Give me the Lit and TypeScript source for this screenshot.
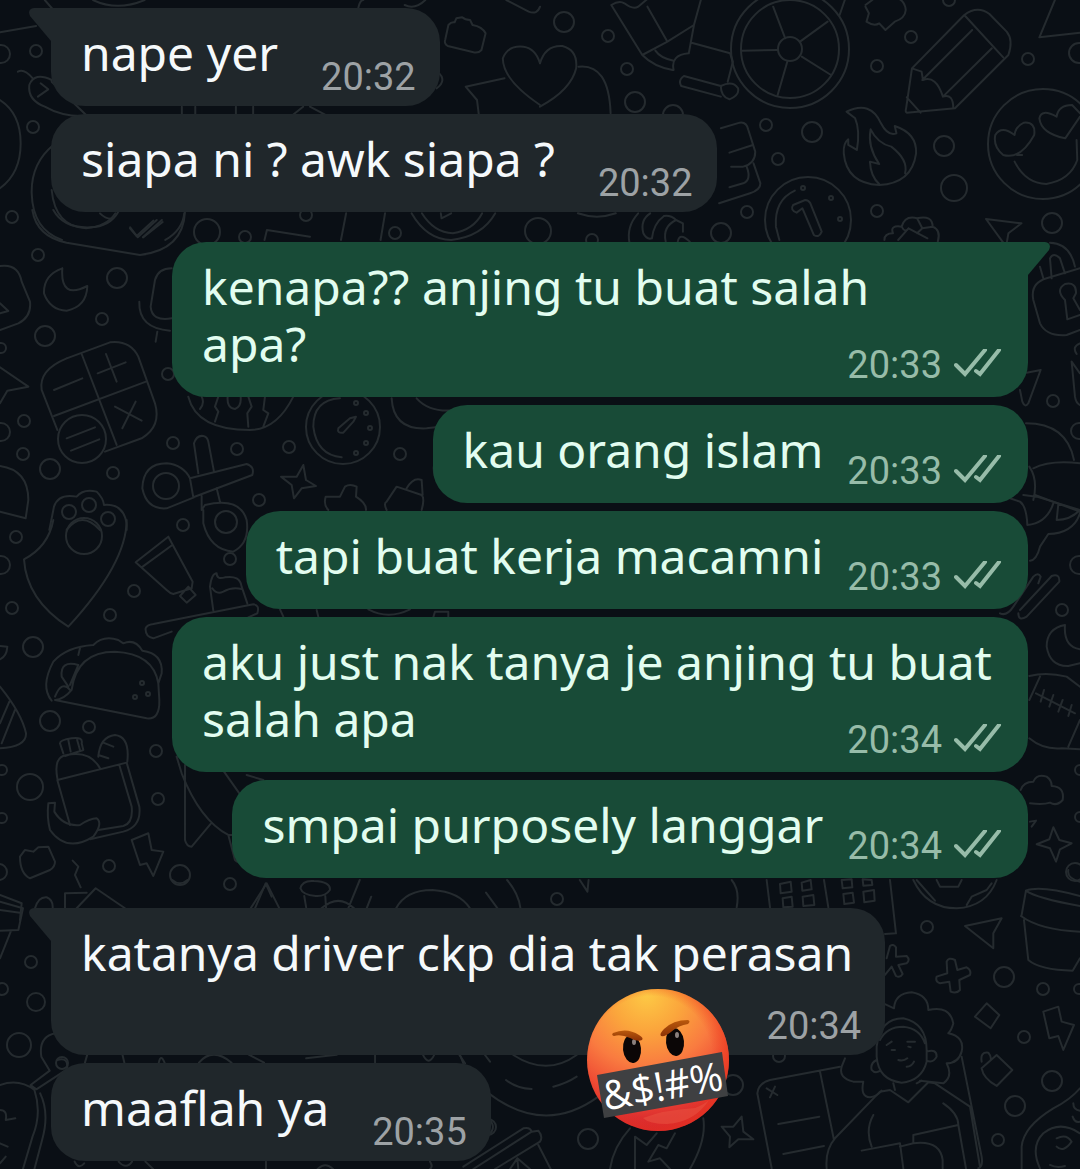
import { LitElement, html, css, svg, nothing } from 'lit';
import { customElement, property } from 'lit/decorators.js';
import { classMap } from 'lit/directives/class-map.js';

type Layout = 'inline' | 'over' | 'below';

interface Message {
  text: string;
  time: string;
  layout?: Layout;
  reaction?: boolean;
}

interface Group {
  mine: boolean;
  messages: Message[];
}

const GROUPS: Group[] = [
  {
    mine: false,
    messages: [
      { text: 'nape yer', time: '20:32' },
      { text: 'siapa ni ? awk siapa ?', time: '20:32' },
    ],
  },
  {
    mine: true,
    messages: [
      { text: 'kenapa?? anjing tu buat salah\napa?', time: '20:33', layout: 'over' },
      { text: 'kau orang islam', time: '20:33' },
      { text: 'tapi buat kerja macamni', time: '20:33' },
      { text: 'aku just nak tanya je anjing tu buat\nsalah apa', time: '20:34', layout: 'over' },
      { text: 'smpai purposely langgar', time: '20:34' },
    ],
  },
  {
    mine: false,
    messages: [
      { text: 'katanya driver ckp dia tak perasan', time: '20:34', layout: 'below', reaction: true },
      { text: 'maaflah ya', time: '20:35' },
    ],
  },
];

/* Wallpaper rings: centre x, centre y, radius. */
const RINGS: number[][] = [
  [1, 54, 9], [36, 51, 6], [33, 127, 6], [12, 217, 6], [207, 232, 13], [245, 237, 6], [306, 215, 6],
  [395, 233, 6], [538, 231, 13], [564, 22, 10], [608, 36, 6], [627, 69, 6], [635, 102, 10], [673, 115, 10],
  [766, 125, 6], [812, 132, 10], [778, 159, 6], [747, 212, 6], [721, 233, 10], [877, 211, 6], [877, 66, 6],
  [911, 37, 6], [949, 0, 6], [1028, 59, 6], [1079, 53, 10], [944, 146, 10], [954, 188, 13], [1052, 223, 10],
  [592, 240, 6], [790, 49, 59], [790, 49, 49], [790, 49, 12], [808, 220, 43], [1043, 144, 55],
  [38, 255, 6], [117, 278, 10], [102, 319, 6], [45, 336, 10], [1, 348, 5], [168, 374, 6], [24, 421, 6],
  [1, 432, 9], [23, 454, 6], [50, 469, 10], [113, 473, 6], [173, 443, 6], [237, 449, 6], [259, 500, 6],
  [183, 525, 6], [166, 486, 13], [226, 522, 11], [69, 512, 7], [89, 505, 7], [108, 519, 7], [82, 439, 24],
  [16, 537, 6], [1, 565, 9], [12, 608, 6], [33, 647, 10], [134, 591, 6], [110, 615, 6], [230, 559, 6],
  [84, 536, 18], [50, 721, 10], [89, 727, 6], [156, 751, 6], [30, 787, 13], [2, 770, 5], [2, 818, 5],
  [158, 799, 6], [-1, 872, 8], [109, 866, 6], [180, 875, 10], [230, 884, 6], [142, 683, 2], [135, 697, 2],
  [148, 694, 2], [289, 447, 6], [400, 454, 6], [343, 427, 37], [356, 403, 2], [366, 413, 2], [370, 428, 2],
  [366, 443, 2], [356, 453, 2], [927, 927, 6], [1004, 977, 10], [1043, 989, 6], [1079, 989, 5],
  [1024, 1037, 6], [1052, 1081, 10], [1015, 1106, 10], [998, 1140, 6], [779, 1056, 6], [733, 1085, 10],
  [31, 962, 6], [2, 989, 6], [36, 1002, 9], [19, 1045, 12], [557, 899, 6], [588, 1139, 10], [488, 1127, 8],
  [62, 1063, 6], [1053, 401, 6], [1079, 431, 8], [1079, 565, 9], [1062, 610, 6], [1080, 770, 5],
  [1080, 817, 5], [1075, 872, 9], [803, 188, 2], [831, 198, 2], [840, 219, 2],
];

/* Wallpaper line art, one entry for each drawing area: transform, paths. */
const SKETCHES: [string, string[]][] = [
  ['scale(.3444 .3333)', [
    'M0 97L105 78M130 0L155 30M270 0Q340 35 420 0M1040 25Q1045 0 1055 0M1175 15Q1205 30 1235 0',
    'M1325 55L1342 52Q1350 60 1365 60L1372 75Q1400 80 1410 100L1398 150Q1390 160 1375 157L1300 138Q1288 130 1293 118L1302 75Q1310 65 1320 67Z',
    'M1470 0L1535 35Q1560 45 1568 20',
    'M1568 315Q1460 240 1460 175Q1475 135 1520 140Q1555 145 1568 190',
    'M1390 342L1385 300L1352 260L1465 235M1270 215Q1300 240 1268 265',
    'M52 215Q70 205 95 235M150 240Q100 215 85 255Q80 300 130 320Q180 350 245 348M150 245L250 345M118 250L140 268L110 290',
    'M0 300Q60 340 60 430Q60 520 0 565M155 435Q90 490 92 580Q95 690 180 720M150 570Q160 680 250 685Q310 680 335 640',
    'M528 320V345M567 320V345M685 320V345M735 320V345M850 345L880 320M900 320L945 345',
    'M378 682L400 712L455 660M415 712L470 660M535 640Q530 690 480 720M768 720L775 690L900 710M1005 640L990 720M1118 640L1105 720',
    'M1195 640Q1240 720 1310 720Q1400 710 1438 640M1225 640Q1260 698 1315 700Q1375 690 1400 640M1280 640L1282 655L1310 640',
  ]],
  ['translate(540 0) scale(.3444 .3333)', [
    'M207 15L297 165L370 125L312 20M207 15Q230 0 245 10Q270 30 285 20L320 -10M297 165Q330 200 385 210M335 152Q350 175 388 182M370 125L447 75L467 0M447 75L432 160M388 210Q378 165 432 160M440 128L552 160L560 185L545 245M418 228L525 258M418 228Q400 240 410 258L525 290M525 258Q525 290 550 298Q580 285 575 265Q560 240 525 258',
    'M0 190Q15 135 65 138Q110 150 105 205Q90 270 0 320M112 200Q200 190 205 340M870 45L885 0',
    'M677 20L712 115M755 125L835 65M760 170L845 225M718 185L690 285M585 152L690 150',
    'M945 15L965 0M945 20L955 40L948 65Q970 80 985 70L1003 90L1030 65Q1060 55 1062 30Q1060 5 1040 -5',
    'M1080 205L1232 45Q1270 15 1305 42L1355 95Q1375 120 1360 165L1205 325L1065 338Q1060 335 1063 325ZM1232 45L1345 172M1255 90L1110 240M1312 145L1170 290M1080 205L1108 215L1112 240Q1150 225 1170 290Q1200 280 1200 325M1065 292L1105 338',
    'M1495 0L1450 112L1568 98',
    'M890 335Q960 300 990 370Q1010 410 1035 400L1030 378Q1095 400 1092 460Q1080 550 985 555Q890 550 882 460Q880 430 895 418L895 435L920 450Q930 390 915 355ZM960 388Q980 430 1020 440Q1070 480 1060 520M960 388Q950 440 985 492L958 485Q960 530 985 552',
    'M1345 465Q1395 480 1435 405Q1440 365 1405 368Q1380 380 1378 405Q1340 375 1322 405Q1315 440 1345 465M1385 465L1400 465M1525 415Q1455 400 1450 355Q1455 325 1500 350Q1505 315 1545 315L1568 340M1525 415L1568 350M1378 485Q1410 550 1470 552Q1540 540 1560 480L1558 420',
    'M525 385L580 368Q600 365 605 390L625 455Q625 490 590 500L555 500M550 458L618 435M620 490L640 550Q640 570 610 580L520 610M600 500Q615 540 590 550L550 562',
    'M740 572Q680 600 685 680L695 720M735 615L770 600Q780 600 785 610L818 695Q810 715 795 705L762 625L745 638Q725 630 735 615',
    'M1000 720Q1000 700 1025 700Q1015 675 1050 680Q1060 645 1095 655Q1140 645 1140 680Q1165 690 1155 725M1050 680Q1060 700 1070 685L1125 715M1070 685L1040 720M1095 655L1110 685L1140 680M1110 685L1095 700',
    'M1295 657L1398 670L1360 700L1355 730M1295 657L1345 728M110 640Q165 660 220 640',
    'M260 730Q250 680 285 640M300 700Q290 660 320 640M325 715Q330 670 360 648M300 700Q310 720 325 715M365 725Q355 680 395 660M395 660L415 670V695M400 725Q405 695 435 725M360 648Q380 645 395 660',
  ]],
  ['translate(0 210) scale(.3333)', [
    'M555 5Q550 120 420 135L200 98Q110 80 97 0M160 0Q190 55 270 52Q330 50 355 5M300 10Q320 30 340 25M390 55L410 78L460 32M430 82L488 36',
    'M0 168Q55 160 65 215L90 275Q95 320 55 340L0 360M0 310L25 303L0 280M187 175Q130 195 132 250Q150 300 200 302Q260 290 262 228Q180 270 187 175',
    'M515 175Q475 175 465 210L452 290Q455 335 515 325M418 275Q415 355 510 362M472 365L467 395',
    'M200 445L330 397Q390 390 415 440L465 580Q485 650 425 685L315 725M172 660L125 540Q115 480 200 445M245 432L350 705M162 618L438 515M162 540L247 505M318 432L350 515M293 490L377 457M345 590L425 632M407 575L367 655M200 685L285 652M213 722L298 688',
    'M0 472L85 530L22 542L0 580M0 768Q85 780 85 870L77 925L0 905',
    'M565 560Q590 660 750 660Q830 660 880 560M605 560Q615 580 600 597M655 560L645 590L655 605L645 635M683 560Q680 595 705 597Q725 590 722 560M745 560L755 590L742 610L745 650M795 560L790 600L805 610L790 650',
    'M595 790L582 700Q590 675 610 678Q622 680 625 695L642 785M570 805L740 762Q765 770 757 795L580 862ZM582 862L500 895Q440 900 427 835Q430 760 500 760Q550 765 570 805M605 858V900L615 885Q720 860 740 930Q750 1000 700 1025Q630 1020 610 940V900M650 835L660 875',
    'M148 960L162 890Q175 850 230 860Q250 835 290 845Q310 865 312 885Q370 880 380 940V960M200 960Q245 900 300 960',
  ]],
  ['translate(0 520) scale(.3333)', [
    'M160 0Q145 80 72 118Q80 240 205 320Q380 130 380 0',
    'M505 50L578 185L575 205L520 222Q510 220 500 210L407 127ZM517 75L425 142M540 228L565 200L587 225L560 248Z',
    'M640 272L630 200Q635 160 650 160Q650 180 675 172Q720 165 725 200L742 250M637 205Q650 225 670 215Q695 200 725 207M515 335L460 355Q435 350 437 325Q440 315 460 312L760 253Q780 255 772 280L745 292',
    'M155 542Q120 500 160 425Q200 380 280 375Q310 345 355 360L370 370Q405 355 427 392Q490 400 485 460L475 490L478 540Q480 600 440 595L165 540M165 540Q190 540 215 510Q230 395 345 395Q460 400 475 490M235 405L240 385M165 530Q185 480 210 510M210 495L235 435Q180 420 185 470L205 500',
    'M0 378L22 380Q20 410 0 418M0 500Q65 580 78 640Q80 680 0 685M28 545L0 610M45 570L5 670',
    'M172 775Q160 710 200 705Q270 690 300 745M172 780L380 728M172 780L210 915M190 700L180 670Q180 660 215 655Q250 650 245 670L250 690L195 708M205 660L212 695M230 655L240 690M295 710Q300 650 345 645Q390 650 382 725M310 668L340 680M295 705L325 715M380 728L418 860Q425 920 370 935L270 958M358 735L395 860Q400 910 370 918L295 930',
    'M145 850L165 848L163 875Q190 920 240 915Q270 895 290 895Q310 910 280 950Q200 1000 150 930Q140 890 145 850',
    'M60 1010L75 990L100 995L115 982L145 980L165 1025Q165 1040 150 1050L90 1075Q60 1060 60 1010M218 1022L235 1040L225 1065L242 1102M195 1165V1120L260 1118M230 1165L287 1105L375 1165M105 1165Q115 1130 140 1132Q160 1140 158 1165M0 1125L65 1150L60 1200',
    'M395 960L445 940L455 990L490 995L460 1068L440 1030L420 1035Z',
    'M530 710L545 760Q600 900 685 945L715 945M555 735L555 960Q560 980 575 980L632 912M685 945L705 1020Q715 1030 725 1022M670 752L725 830M740 765L790 780M765 1165L797 1090L815 1130',
  ]],
  ['translate(180 380) scale(.3333)', [
    'M480 55Q400 60 400 140Q410 225 485 232M475 145L510 115L528 110L520 125L490 158Q470 160 475 145',
    'M370 255L378 300L408 318L365 325L342 355L335 315L303 290L350 290Z',
    'M445 390Q430 375 437 350L480 350L495 320Q510 310 530 320L528 350Q560 370 558 390M620 390Q610 370 620 365L650 320L725 345Q735 355 725 390M680 325Q700 290 725 300L728 345M635 55Q640 150 740 145L780 140M710 55Q750 100 830 90M770 225Q750 270 775 310',
    'M565 688Q625 720 690 688M760 712L765 695H805V712M300 688L310 710M410 690L415 710',
  ]],
  ['translate(820 230) scale(.3333)', [
    'M660 110L670 145M695 145L690 85Q700 65 720 85L735 130M690 38Q750 40 765 110M780 115L680 145Q630 160 640 210L660 280Q680 320 740 315L780 300M735 210Q705 180 735 162Q770 155 768 190L760 205L780 240M735 210L742 268L780 255',
    'M600 480L607 515Q615 535 625 520L662 420L620 428M755 395L780 430M755 395L765 500Q768 520 780 525M780 340Q755 350 770 372',
    'M618 580Q740 580 762 690M640 715Q690 690 780 700M628 710Q655 750 640 810M610 795L650 800L780 840',
  ]],
  ['translate(1000 380) scale(.3333)', [
    'M30 355L60 365Q80 380 82 435Q140 430 160 370M175 372L170 420Q210 420 240 390M240 400Q220 460 145 462L120 500Q110 540 90 542M105 345L240 395',
    'M0 700Q20 710 40 680L100 590Q115 575 122 590L115 610M60 690L155 588Q180 580 178 605L80 710Q55 725 55 700',
    'M195 735Q140 745 140 800Q150 860 205 858L240 850M195 735Q190 800 240 808',
    'M88 888Q140 875 200 890L240 920M120 890L88 960M88 1075Q130 1110 185 1105L240 1108M240 1020L205 1100M108 940L225 1000M132 930L122 965M160 945L148 980M188 960L175 995M215 975L205 1008',
    'M62 1230Q70 1205 100 1205Q110 1180 140 1190Q155 1200 155 1218Q195 1220 188 1260Q170 1280 150 1268Q130 1275 90 1270M90 1325L108 1322L95 1340M160 1342L178 1380L215 1390L180 1408L168 1445L150 1405L110 1393L148 1378Z',
  ]],
  ['translate(720 870) scale(.3333)', [
    'M35 30Q60 60 50 112M140 30L150 112M312 30L325 112M510 30L528 190L495 192M180 42L212 35L215 65L182 70ZM245 38L272 30L275 58L247 62ZM188 85L215 80L218 110L190 112ZM248 80L280 75L283 105L250 108ZM365 30L395 28L397 52L368 55ZM370 72L398 68L402 98L373 102ZM428 28L455 30L457 45L430 47ZM430 65L462 60L464 92L433 97Z',
    'M580 30Q620 115 710 115Q800 110 830 30M590 30L645 92M650 30L660 50H715L725 30M740 105L755 80L800 60L815 40',
    'M735 168L845 145L820 190V235ZM905 135L918 62Q960 45 1080 78M918 62Q950 85 1080 108M903 138Q960 180 1080 185M912 150L925 270Q960 300 1058 302L1080 265M1045 0Q1040 25 1080 35',
    'M680 275Q685 260 705 270L712 300L740 292Q755 300 750 315L718 330L720 360Q710 372 692 365L688 335L660 340Q645 335 650 320L682 310ZM765 440L800 400L838 435L812 475ZM970 425L1015 410L1025 455L1062 465L1030 540L1015 498L988 505ZM785 595L830 555L877 600L830 648Q790 625 785 595M785 575Q780 545 805 548Q815 560 812 570',
    'M500 265L510 228Q520 220 528 232V260L560 258Q572 270 560 280L535 285L548 312Q540 325 528 318L515 290L495 315',
    'M490 400L522 415Q525 370 575 367Q625 375 625 420Q690 405 700 460Q695 480 685 490Q735 500 725 545Q715 580 680 580Q700 620 670 640L600 632M365 590Q355 625 400 635L430 635Q420 680 450 682Q470 680 485 662M365 590L375 565M470 560V530Q480 445 550 445Q620 460 620 540V575Q605 632 545 638Q475 630 470 560M480 510Q500 470 550 470Q600 475 615 520M620 545Q650 535 650 560Q640 580 620 572M470 570Q450 580 455 600Q465 612 480 603M500 525L515 515M562 515L585 515M535 570Q550 575 562 565M560 590Q575 590 582 575M515 540L525 540M565 530L572 532',
    'M155 895L112 670Q115 640 150 630L360 590M300 605L342 810M140 655L172 675M165 650L150 682M175 762L298 740M190 852L312 828M320 895Q315 840 345 805L480 665L510 660L565 697L625 637L645 640L750 710M725 560L785 860Q790 890 775 895M750 710L780 890M520 640L525 660M590 640L605 632M460 735Q435 780 455 830M425 842L540 820L550 895M540 830L580 820Q660 810 668 870V895M580 820V795L715 765L738 895M670 700Q715 730 715 765',
    'M5 770L40 770L65 740L70 785L100 808L55 808L28 832L30 800ZM1080 655Q1050 690 1000 715Q910 770 905 830V895M960 895Q930 830 970 790Q1020 750 1080 790M1010 805Q1040 790 1055 815Q1030 850 1010 830M1060 700Q1060 720 1080 722M1058 740Q1065 760 1080 755M990 885Q1010 895 1035 888',
  ]],
  ['translate(0 880) scale(.3827 .3333)', [
    'M0 65L60 85L48 150L0 152M0 90L52 98M28 155L0 235M655 85L697 10L730 85M785 25Q790 0 820 3Q865 5 862 30Q850 50 825 48Q790 45 785 25M795 48L800 82M850 48L852 85M840 85Q885 40 925 85M910 85L940 0M958 85L970 50M1035 85Q1060 30 1130 30Q1200 35 1228 85M1325 0Q1355 40 1360 85M1270 38L1300 85M1515 0L1535 35L1538 0M450 0Q470 20 490 0',
    'M145 460Q100 470 108 530L130 572L80 615L95 628L175 568Q180 530 150 540M0 615Q50 595 90 630Q110 700 85 770L60 867M105 640Q130 700 110 780L90 867M0 690Q20 690 15 720L40 715M0 790L20 800M0 850L15 830',
    'M228 524L222 548M320 524L325 548M415 548Q420 520 430 548M520 548Q555 500 605 548M650 524L690 548M800 535L880 524M980 524V548M1105 524Q1120 560 1135 524M1200 524L1215 550',
    'M195 845Q205 870 220 850M310 845Q330 870 345 845M380 845L400 867M695 845V867M830 867Q850 845 870 867',
  ]],
  ['translate(430 1040) scale(.3333)', [
    'M90 45L100 70M165 45L180 65M250 45Q350 110 440 45M228 120Q260 145 305 147M370 140Q410 130 440 110M170 155Q340 290 505 170M170 230Q205 260 175 285',
    'M100 380L280 265Q300 260 305 275L130 387M305 275L325 272Q340 290 330 305L195 387M325 315L362 387M240 387L262 355L300 387M262 355L265 387M0 365Q10 380 0 387',
    'M540 387Q550 320 600 265M615 387V290L650 315L680 280M735 280L710 325L685 315L655 365L690 355L720 387M820 235Q830 300 780 387',
  ]],
];

@customElement('chat-wallpaper')
export class ChatWallpaper extends LitElement {
  static styles = css`
    :host {
      display: block;
      overflow: hidden;
    }
    .art {
      display: block;
      width: 100%;
      height: 100%;
      fill: none;
      stroke: #252b2f;
      stroke-width: 2;
      stroke-linecap: round;
      stroke-linejoin: round;
    }
    .line {
      vector-effect: non-scaling-stroke;
    }
  `;

  render() {
    return html`
      <svg class="art" viewBox="0 0 1080 1169" preserveAspectRatio="xMidYMin slice" aria-hidden="true">
        ${RINGS.map(([x, y, r]) => svg`<circle cx=${x} cy=${y} r=${r}></circle>`)}
        ${SKETCHES.map(
          ([place, paths]) => svg`<g transform=${place}>${paths.map((d) => svg`<path class="line" d=${d}></path>`)}</g>`,
        )}
      </svg>
    `;
  }
}

@customElement('angry-sticker')
export class AngrySticker extends LitElement {
  static styles = css`
    :host {
      display: block;
    }
    .face {
      display: block;
      width: 100%;
      overflow: visible;
    }
    .curse {
      font-family: 'Open Sans', 'Noto Sans', sans-serif;
      font-size: 40px;
      fill: #ffffff;
      text-anchor: middle;
    }
  `;

  render() {
    return html`
      <svg class="face" viewBox="0 0 142 144" role="img" aria-label="Angry face">
        <defs>
          <radialGradient id="skin" cx=".42" cy=".04" r="1">
            <stop offset="0" stop-color="#fdc945"></stop>
            <stop offset=".25" stop-color="#fba63c"></stop>
            <stop offset=".5" stop-color="#f97b40"></stop>
            <stop offset=".72" stop-color="#ee4a34"></stop>
            <stop offset=".95" stop-color="#d3202c"></stop>
          </radialGradient>
          <radialGradient id="rim" cx=".45" cy=".48" r=".55">
            <stop offset=".78" stop-color="#f0401f" stop-opacity="0"></stop>
            <stop offset="1" stop-color="#ec3a1c" stop-opacity=".6"></stop>
          </radialGradient>
          <linearGradient id="brow" x1="0" y1="0" x2="0" y2="1">
            <stop offset="0" stop-color="#b9590c"></stop>
            <stop offset="1" stop-color="#8d3206"></stop>
          </linearGradient>
        </defs>
        <circle cx="71" cy="72" r="71" fill="url(#skin)"></circle>
        <circle cx="71" cy="72" r="71" fill="url(#rim)"></circle>
        <path d="M56 130Q76 122 108 120Q118 116 122 112Q108 134 80 136Q62 136 56 130" fill="#e8503f" opacity=".6"></path>
        <ellipse cx="45" cy="61" rx="9" ry="14" fill="#0b0606" transform="rotate(-6 45 61)"></ellipse>
        <ellipse cx="88" cy="54" rx="9" ry="14" fill="#0b0606" transform="rotate(-6 88 54)"></ellipse>
        <ellipse cx="47" cy="54" rx="2" ry="3" fill="#8a7f7c"></ellipse>
        <ellipse cx="90" cy="47" rx="2" ry="3" fill="#8a7f7c"></ellipse>
        <path d="M26 45Q40 39 52 47Q57 50 55 52Q50 54 43 50Q34 46 27 48Q24 47 26 45" fill="url(#brow)"></path>
        <path d="M101 32Q86 32 77 41Q72 46 74 48Q78 49 84 44Q92 37 101 36Q104 33 101 32" fill="url(#brow)"></path>
        <path d="M10 87L135 64L141 108L17 130Z" fill="#3f4042"></path>
        <text class="curse" transform="translate(78 112) rotate(-10)">&amp;$!#%</text>
      </svg>
    `;
  }
}

@customElement('chat-bubble')
export class ChatBubble extends LitElement {
  @property({ type: Boolean, reflect: true }) mine = false;
  @property({ type: Boolean }) first = false;
  @property({ attribute: false }) message!: Message;

  static styles = css`
    :host {
      display: flex;
    }
    :host([mine]) {
      justify-content: flex-end;
    }
    .bubble {
      position: relative;
      display: grid;
      grid-template-columns: auto auto;
      box-sizing: border-box;
      padding: 16px 24px 9px 30px;
      border-radius: 34px;
      background: #20272b;
      color: #f5f9fb;
    }
    .mine {
      padding-right: 26px;
      padding-bottom: 12px;
      background: #184b37;
      color: #e2fdf0;
    }
    .first {
      border-top-left-radius: 0;
    }
    .first.mine {
      border-top-left-radius: 34px;
      border-top-right-radius: 0;
    }
    .text {
      box-sizing: border-box;
      margin: 0;
      padding: 0 43px 16px 0;
      font-size: 48px;
      line-height: 57px;
      white-space: pre-line;
    }
    .mine .text {
      padding-right: 24px;
      padding-bottom: 13px;
    }
    .meta {
      display: flex;
      align-items: center;
      align-self: end;
      justify-self: end;
      gap: 12px;
      color: #9da2a5;
      font-family: Roboto, 'Liberation Sans', sans-serif;
      font-size: 38px;
      line-height: 40px;
    }
    .mine .meta {
      color: #97bca9;
    }
    .over,
    .below {
      grid-template-columns: auto;
    }
    .over .text,
    .over .meta {
      grid-area: 1 / 1;
    }
    .over .text {
      min-width: 800px;
      padding-right: 8px;
    }
    .below {
      row-gap: 9px;
    }
    .below .text {
      padding-right: 8px;
    }
    .ticks {
      display: block;
      width: 48px;
      height: 32px;
      fill: none;
      stroke: currentColor;
      stroke-width: 4;
      stroke-linecap: round;
    }
    .tail {
      position: absolute;
      top: 0;
      right: 100%;
      width: 22px;
      height: 34px;
      fill: #20272b;
    }
    .mine .tail {
      right: auto;
      left: 100%;
      fill: #184b37;
      transform: scaleX(-1);
    }
    .sticker {
      position: absolute;
      top: 80px;
      left: 536px;
      width: 142px;
      z-index: 1;
    }
  `;

  render() {
    const { text, time, layout = 'inline', reaction } = this.message;
    return html`
      <div class=${classMap({ bubble: true, mine: this.mine, first: this.first, [layout]: true })}>
        ${this.first
          ? html`<svg class="tail" viewBox="0 0 22 34" aria-hidden="true">
              <path d="M22 0H5Q-2 1 1 8L22 33Z"></path>
            </svg>`
          : nothing}
        <p class="text">${text}</p>
        <div class="meta">
          <time>${time}</time>
          ${this.mine
            ? html`<svg class="ticks" viewBox="0 0 48 32" role="img" aria-label="Delivered">
                <path d="M2 16L11 25L31 1M22 22L26 25L45 1"></path>
              </svg>`
            : nothing}
        </div>
        ${reaction ? html`<angry-sticker class="sticker"></angry-sticker>` : nothing}
      </div>
    `;
  }
}

@customElement('app-root')
export class AppRoot extends LitElement {
  static styles = css`
    :host {
      display: block;
      position: relative;
      min-height: 100vh;
      overflow: hidden;
      background: #0a0f15;
      font-family: 'Noto Sans', 'Open Sans', sans-serif;
    }
    .wallpaper {
      position: absolute;
      inset: 0;
    }
    .thread {
      position: relative;
      display: flex;
      flex-direction: column;
      gap: 30px;
      padding: 8px 52px 7px 51px;
    }
    .group {
      display: flex;
      flex-direction: column;
      gap: 8px;
    }
    .raised {
      position: relative;
      z-index: 1;
    }
  `;

  render() {
    return html`
      <chat-wallpaper class="wallpaper"></chat-wallpaper>
      <main class="thread">
        ${GROUPS.map(
          (group) => html`<section class="group">
            ${group.messages.map(
              (message, i) => html`<chat-bubble
                class=${classMap({ raised: !!message.reaction })}
                ?mine=${group.mine}
                ?first=${i === 0}
                .message=${message}
              ></chat-bubble>`,
            )}
          </section>`,
        )}
      </main>
    `;
  }
}
